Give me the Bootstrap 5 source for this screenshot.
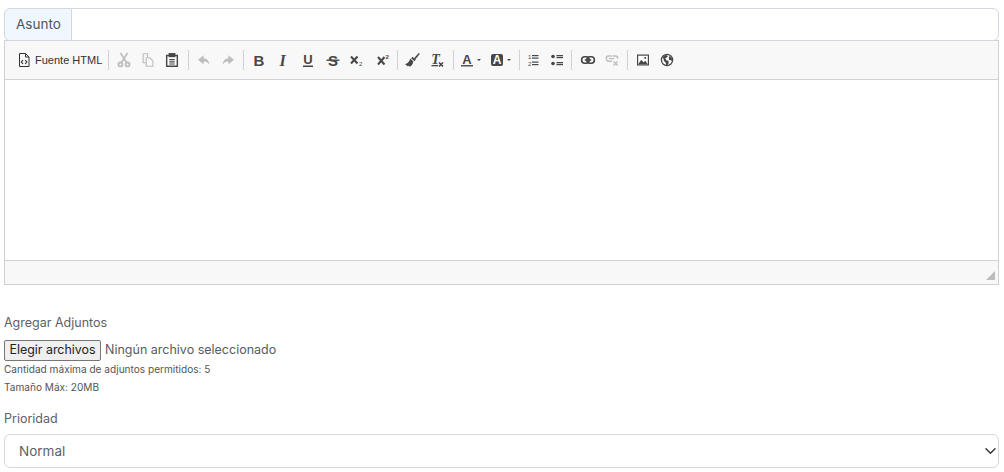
<!DOCTYPE html>
<html lang="es">
<head>
<meta charset="utf-8">
<title>Formulario</title>
<link href="https://cdn.jsdelivr.net/npm/bootstrap@5.3.0/dist/css/bootstrap.min.css" rel="stylesheet">
<style>
body{font-family:Inter,"Noto Sans",sans-serif;color:#5c6168;background:#fff;font-size:13px;padding:8px 5px 0 4px;overflow:hidden;height:472px}
.subject-addon{background:#f0f8ff;border-color:#d3d8de;color:#4e5560;font-size:13.5px;padding:0 11px;width:68px;height:33px}
.subject-input{height:33px;border-color:#d3d8de}
.editor-box{border:1px solid #d1d1d1;height:245px;margin-top:-1px;display:flex;flex-direction:column}
.tool-strip{height:39px;background:#f8f8f8;border-bottom:1px solid #d1d1d1;padding-left:10px;flex:none}
.tool-btn{width:24.4px;height:20px;flex:none;color:#474747;display:flex;align-items:center;justify-content:center}
.tool-btn svg{width:16px;height:16px;display:block;flex:none}
.tool-off{opacity:.32}
.tool-sep{width:1px;height:20px;background:#d1d1d1;margin:0 3px;flex:none}
.sep-before-list{margin-right:0}
.sep-before-media{margin-left:2.5px}
.tool-src{width:89.500px;font:11px "Liberation Sans",sans-serif;color:#333;gap:3px;padding-left:1px;justify-content:flex-start;white-space:nowrap}
.tool-color{width:29.500px;justify-content:flex-start;padding-left:2.5px}
.tool-caret{width:0;height:0;border:solid transparent;border-width:2.5px 2.5px 0;border-top-color:#474747;margin-left:2px;flex:none}
.edit-area{flex:1 1 auto;background:#fff}
.status-strip{height:24px;background:#f8f8f8;border-top:1px solid #d1d1d1;flex:none;padding-right:3px;padding-bottom:4px}
.resize-mark{width:0;height:0;border-style:solid;border-width:0 0 9px 9px;border-color:transparent transparent #bcbcbc transparent}
.field-label{font-size:12.5px;color:#5c6168;line-height:18px;margin:0}
.attach-label{margin-top:29px}
.pick-row{margin-top:8px;height:21px;font-size:12.5px;gap:4px;color:#565b62}
.pick-btn{background:#efefef;border:1px solid #767676;border-radius:2px;color:#222;font-size:12.4px;height:21px;width:97px;padding:0;line-height:1}
.hint-line{font-size:10.1px;color:#555;line-height:12px;margin:0}
.hint-a{margin-top:2px}
.hint-b{margin-top:6px}
.priority-label{margin-top:17px}
.priority-select{height:34px;margin-top:6px;border-color:#d3d8de;color:#5c6168;font-size:13.5px;padding:0 14px;background-position:right 0 center;background-size:15px 12px;border-radius:6px}
</style>
</head>
<body>
<div class="input-group subject-wrap">
  <span class="input-group-text subject-addon">Asunto</span>
  <input type="text" class="form-control subject-input" aria-label="Asunto">
</div>

<div class="editor-box">
  <div class="tool-strip d-flex align-items-center">
    <div class="tool-btn tool-src">
      <svg viewBox="0 0 16 16" fill="none" stroke="currentColor"><path d="M3.500 1.500h6l3.500 3.500v9.500h-9.500z"/><path d="M9.500 1.500v3.500h3.500"/><path d="M7 8l-1.600 2L7 12M9.200 8l1.600 2-1.600 2" stroke-width="1.200"/></svg>
      <span>Fuente HTML</span>
    </div>
    <i class="tool-sep"></i>
    <div class="tool-btn tool-off"><svg viewBox="-1 -1 18 18" fill="none" stroke="currentColor" stroke-width="2"><path d="M4 0l7 11M12 0L5 11"/><circle cx="4" cy="13" r="2.200"/><circle cx="12" cy="13" r="2.200"/></svg></div>
    <div class="tool-btn tool-off"><svg viewBox="-1 -1 18 18" fill="none" stroke="currentColor" stroke-width="1.300"><path d="M2.500 1h5v3.500M2.500 1v10h3"/><path d="M6 5.500h4l3.500 3.500v6H6z"/></svg></div>
    <div class="tool-btn"><svg viewBox="-1 -1 18 18" fill="none" stroke="currentColor" stroke-width="1.600"><path d="M5 3H2v12h12V3h-3"/><rect x="5" y="1" width="6" height="3" fill="currentColor"/><path d="M5 7.500h6M5 10h6M5 12.500h6" stroke-width="1.400"/></svg></div>
    <i class="tool-sep"></i>
    <div class="tool-btn tool-off"><svg viewBox="-2 -2 20 20" fill="currentColor"><path d="M7.500 2L.5 7.800l7 5.700V9.800c3 0 5 .8 7 3.700C14.500 9 11.500 6 7.500 5.700z"/></svg></div>
    <div class="tool-btn tool-off"><svg viewBox="-2 -2 20 20" fill="currentColor"><path d="M8.500 2l7 5.800-7 5.700V9.800c-3 0-5 .8-7 3.700C1.500 9 4.500 6 8.500 5.700z"/></svg></div>
    <i class="tool-sep"></i>
    <div class="tool-btn"><svg viewBox="0 0 16 16" fill="currentColor"><text x="7" y="13.500" text-anchor="middle" font-family="Liberation Sans" font-weight="700" font-size="15">B</text></svg></div>
    <div class="tool-btn"><svg viewBox="0 0 16 16" fill="currentColor"><text x="6.500" y="13.500" text-anchor="middle" font-family="Liberation Serif" font-weight="700" font-style="italic" font-size="16">I</text></svg></div>
    <div class="tool-btn"><svg viewBox="0 0 16 16" fill="currentColor"><text x="8" y="11.500" text-anchor="middle" font-family="Liberation Sans" font-weight="700" font-size="13">U</text><rect x="3" y="13.500" width="10" height="1.500"/></svg></div>
    <div class="tool-btn"><svg viewBox="0 0 16 16" fill="currentColor"><text x="8" y="13.500" text-anchor="middle" font-family="Liberation Sans" font-weight="700" font-size="15">S</text><rect x="1.500" y="7.500" width="13" height="1.400"/></svg></div>
    <div class="tool-btn"><svg viewBox="0 0 16 16" fill="none" stroke="currentColor" stroke-width="2"><path d="M2 4.500l6.500 7M8.500 4.500l-6.500 7"/><text x="10" y="14" font-family="Liberation Sans" font-size="6" stroke="none" fill="currentColor">2</text></svg></div>
    <div class="tool-btn"><svg viewBox="0 0 16 16" fill="none" stroke="currentColor" stroke-width="2"><path d="M4 5l6.500 7.500M10.500 5L4 12.500"/><text x="11.500" y="6.500" font-family="Liberation Sans" font-size="6" font-weight="700" stroke="none" fill="currentColor">2</text></svg></div>
    <i class="tool-sep"></i>
    <div class="tool-btn"><svg viewBox="1 0 16 16" fill="currentColor"><path d="M10 6.300l4.700-5.200 1.100 1-4.600 5.400z"/><path d="M8.500 4.800l3.300 3-1.300 1.500-3.300-3z"/><path d="M6.200 6.500l3.200 3c-.5 2.500-1.800 4.300-3.600 5.300-.3-.7-.7-1.200-1.200-1.600.1.500 0 .9-.3 1.300-1-.5-2.300-1.300-3.300-2.500 2.700-.3 4.500-2.300 5.200-5.500z"/></svg></div>
    <div class="tool-btn"><svg viewBox="0 0 16 16" fill="currentColor"><text x="6.500" y="11.500" text-anchor="middle" font-family="Liberation Serif" font-weight="700" font-style="italic" font-size="14">T</text><path d="M10 10.500l4 4M14 10.500l-4 4" stroke="currentColor" stroke-width="1.700" fill="none"/><rect x="2.500" y="13" width="6.500" height="1.300"/></svg></div>
    <i class="tool-sep"></i>
    <div class="tool-btn tool-color"><svg viewBox="0 0 16 16" fill="currentColor"><text x="8" y="11.500" text-anchor="middle" font-family="Liberation Sans" font-weight="700" font-size="13">A</text><rect x="2" y="13" width="12" height="1.500" fill="#555"/></svg><i class="tool-caret"></i></div>
    <div class="tool-btn tool-color"><svg viewBox="0 0 16 16"><rect x="2" y="2" width="12" height="12" rx="2" fill="#474747"/><text x="8" y="12.300" text-anchor="middle" font-family="Liberation Sans" font-weight="700" font-size="12" fill="#fff">A</text></svg><i class="tool-caret"></i></div>
    <i class="tool-sep sep-before-list"></i>
    <div class="tool-btn"><svg viewBox="-1 0 16 16" fill="currentColor"><text x="3" y="7" font-family="Liberation Sans" font-size="6">1</text><text x="3" y="13.500" font-family="Liberation Sans" font-size="6">2</text><rect x="7" y="3" width="6.500" height="1.200"/><rect x="7" y="5.500" width="6.500" height="1.200"/><rect x="7" y="9.500" width="6.500" height="1.200"/><rect x="7" y="12" width="6.500" height="1.200"/></svg></div>
    <div class="tool-btn"><svg viewBox="-1 0 16 16" fill="currentColor"><circle cx="4" cy="4.500" r="1.800"/><circle cx="4" cy="11.500" r="1.800"/><rect x="7.500" y="3" width="6.500" height="1.300"/><rect x="7.500" y="5" width="6.500" height="1.200"/><rect x="7.500" y="10" width="6.500" height="1.300"/><rect x="7.500" y="12" width="6.500" height="1.200"/></svg></div>
    <i class="tool-sep"></i>
    <div class="tool-btn"><svg viewBox="-2 -2 20 20" fill="none" stroke="currentColor" stroke-width="2"><rect x="0" y="4" width="9.500" height="8" rx="4"/><rect x="6.500" y="4" width="9.500" height="8" rx="4"/><path d="M4 8h8"/></svg></div>
    <div class="tool-btn tool-off"><svg viewBox="-2 -2 20 20" fill="none" stroke="currentColor" stroke-width="1.800"><path d="M8 3H4a3.200 3.200 0 0 0 0 6.500h4M9 3h3a3.200 3.200 0 0 1 3.200 3.200M4 6.300h7"/><path d="M10 10l5 5M15 10l-5 5"/></svg></div>
    <i class="tool-sep sep-before-media"></i>
    <div class="tool-btn"><svg viewBox="0 0 16 16"><rect x="2" y="2.500" width="12" height="11" fill="#474747"/><rect x="3.200" y="3.700" width="9.600" height="8.600" fill="#fff"/><path d="M3.200 12.300l3-4.500 2.300 2.500 1.800-1.500 2.500 3.500z" fill="#474747"/><circle cx="10.200" cy="6" r="1" fill="#474747"/></svg></div>
    <div class="tool-btn"><svg viewBox="0 0 16 16"><circle cx="8" cy="8" r="5.600" fill="#fff" stroke="#474747" stroke-width="1.300"/><path d="M3.800 5l2.500-2 2.700.8-1 1.800-1.700.5.900 2.200 2.200.4.400 2.200-1.800 2.600-.9-.4-.4-2.700-1.800-1.300-.4-2.200zM10.500 3.800l2.400 2.700.4 2.700-1.300-.9-1.800-.4-.4-1.800z" fill="#474747"/></svg></div>
  </div>
  <div class="edit-area"></div>
  <div class="status-strip d-flex justify-content-end align-items-end"><i class="resize-mark"></i></div>
</div>

<p class="field-label attach-label">Agregar Adjuntos</p>
<div class="pick-row d-flex align-items-center">
  <button type="button" class="pick-btn">Elegir archivos</button>
  <span>Ningún archivo seleccionado</span>
</div>
<p class="hint-line hint-a">Cantidad máxima de adjuntos permitidos: 5</p>
<p class="hint-line hint-b">Tamaño Máx: 20MB</p>
<p class="field-label priority-label">Prioridad</p>
<select class="form-select priority-select" aria-label="Prioridad"><option>Normal</option></select>
</body>
</html>
